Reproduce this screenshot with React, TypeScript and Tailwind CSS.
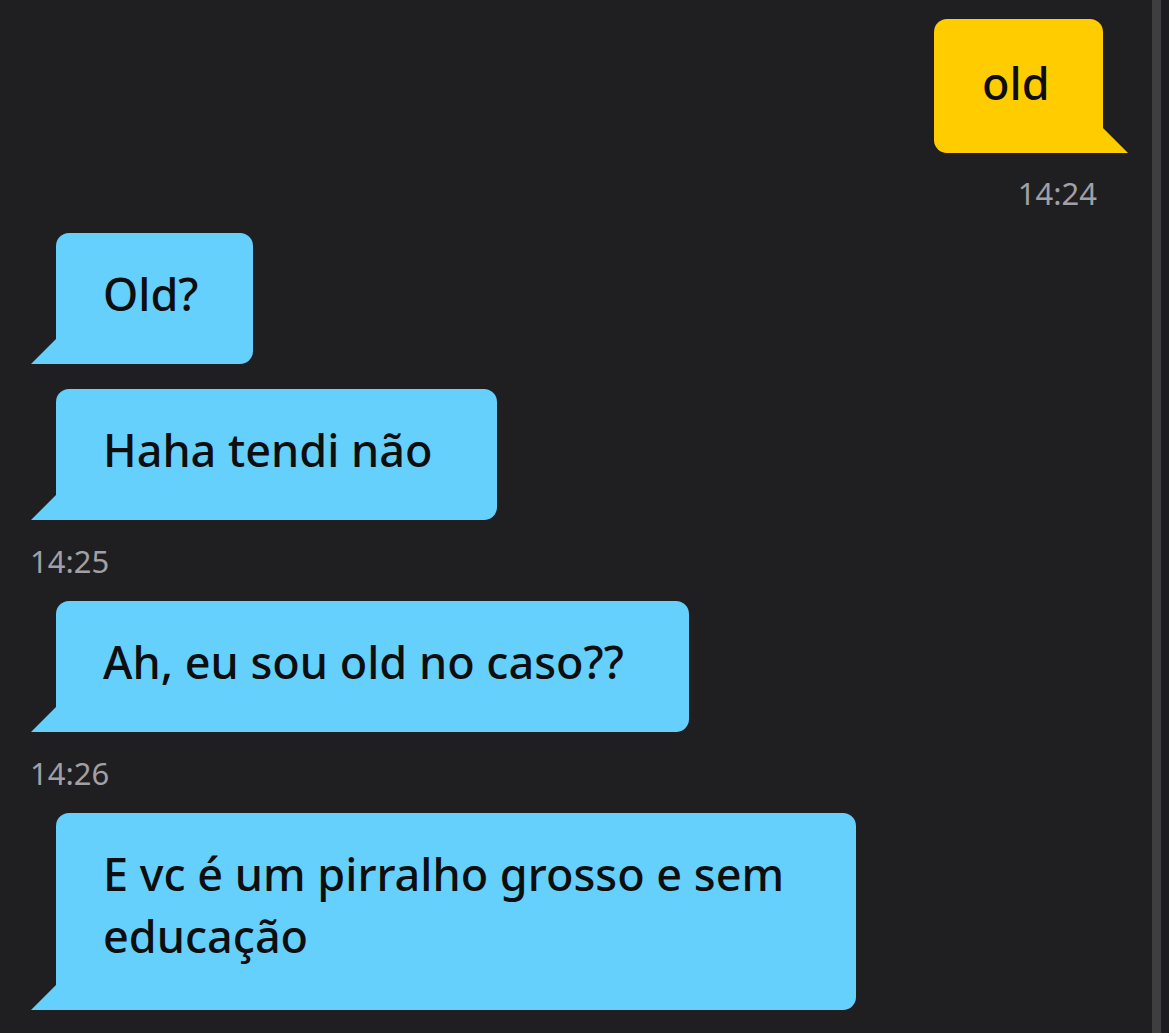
import React from "react";

const font = { fontFamily: '"Noto Sans", "Open Sans", sans-serif' };

function TailLeft({ color }: { color: string }) {
  return (
    <svg className="absolute bottom-0 left-[-25px] block" width="26" height="26" viewBox="0 0 26 26">
      <polygon points="26,0 0,26 26,26" fill={color} />
    </svg>
  );
}

function TailRight({ color }: { color: string }) {
  return (
    <svg className="absolute bottom-0 right-[-25px] block" width="26" height="26" viewBox="0 0 26 26">
      <polygon points="0,0 26,26 0,26" fill={color} />
    </svg>
  );
}

function InBubble({ w, pb, children }: { w: string; pb: string; children: React.ReactNode }) {
  return (
    <div className={`relative ml-[56px] ${w} ${pb} rounded-[13px] rounded-bl-none bg-[#66d0fd] pl-[47px] pr-[20px] pt-[30px] text-[45px] font-medium leading-[62px] text-[#0e0e0e]`}>
      {children}
      <TailLeft color="#66d0fd" />
    </div>
  );
}

function TimeLeft({ t }: { t: string }) {
  return (
    <div className="flex h-[81px] items-center pl-[30px] text-[31px] leading-[30px] text-[#a0a0a6]">
      {t}
    </div>
  );
}

export default function App() {
  return (
    <div className="flex h-[1033px] w-full overflow-hidden bg-[#1f1f21]" style={font}>
      <div className="flex w-[1152px] flex-col pt-[19px]">
        <div className="flex justify-end pr-[49px]">
          <div className="relative w-[169px] rounded-[13px] rounded-br-none bg-[#ffcc00] pl-[48px] pt-[33px] pb-[39px] text-[45px] font-medium leading-[62px] text-[#0e0e0e]">
            old
            <TailRight color="#ffcc00" />
          </div>
        </div>
        <div className="flex h-[80px] items-center justify-end pr-[55px] text-[31px] leading-[30px] text-[#a0a0a6]">
          14:24
        </div>
        <InBubble w="w-[197px]" pb="pb-[39px]">Old?</InBubble>
        <div className="h-[25px]" />
        <InBubble w="w-[441px]" pb="pb-[39px]">Haha tendi não</InBubble>
        <TimeLeft t="14:25" />
        <InBubble w="w-[633px]" pb="pb-[39px]">Ah, eu sou old no caso??</InBubble>
        <TimeLeft t="14:26" />
        <InBubble w="w-[800px]" pb="pb-[43px]">E vc é um pirralho grosso e sem educação</InBubble>
      </div>
      <div className="w-[9px] bg-[#3e3e40]" />
      <div className="flex-1 bg-[#1c1c20]" />
    </div>
  );
}
